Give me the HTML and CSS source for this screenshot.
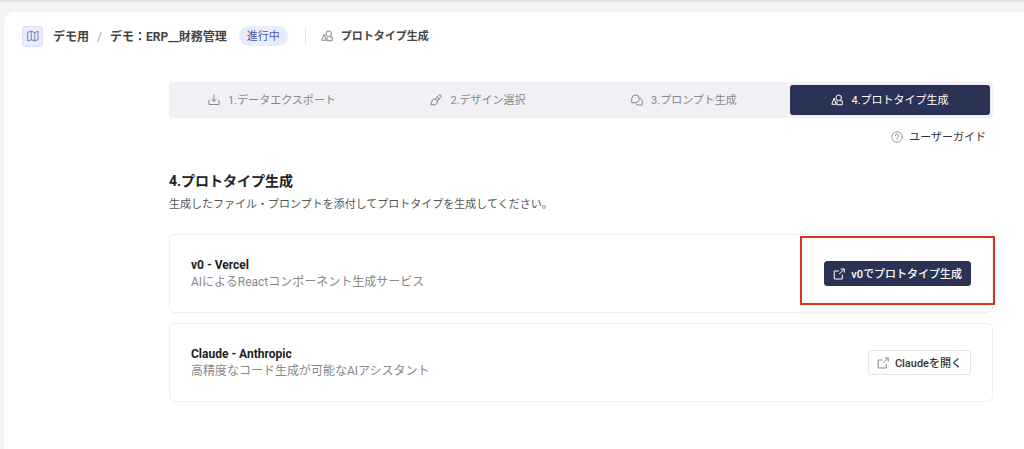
FILE: index.html
```html
<!DOCTYPE html>
<html lang="ja">
<head>
    <meta charset="UTF-8">
    <meta name="viewport" content="width=device-width, initial-scale=1.0">
    <title>プロトタイプ生成</title>
    <link rel="stylesheet" href="styles.css">
</head>
<body>
    <!-- 共通アイコン -->
    <svg class="sprite" aria-hidden="true">
        <symbol id="icon-shapes" viewBox="0 0 24 24">
            <path d="M6 9 L1.5 20.5 H9.5 Z"/>
            <circle cx="15.5" cy="7.5" r="5.5"/>
            <path d="M12 14.5 V21.5 H22.5 V13.5 H18.5"/>
        </symbol>
        <symbol id="icon-external" viewBox="0 0 24 24">
            <path d="M11 6 H2.5 V22 H18.5 V14"/>
            <path d="M16 2 H22.5 V8.5 M22 2.5 L13 11.5"/>
        </symbol>
    </svg>

    <div class="panel">
        <header class="topbar">
            <span class="map">
                <svg class="icon" viewBox="0 0 24 24"><path d="M2 4.5 L8.5 2.5 L15.5 5 L22 2.5 V19.5 L15.5 21.5 L8.5 19.5 L2 21.5 Z M8.5 2.5 V19.5 M15.5 5 V21.5"/></svg>
            </span>
            <nav class="crumbs">
                <a href="#">デモ用</a>
                <span class="slash">/</span>
                <a href="#">デモ：ERP__財務管理</a>
            </nav>
            <span class="status">進行中</span>
            <div class="current">
                <svg class="icon"><use href="#icon-shapes"/></svg>
                <span>プロトタイプ生成</span>
            </div>
        </header>

        <main class="content">
            <div class="steps">
                <button type="button" class="step">
                    <svg class="icon" viewBox="0 0 24 24"><path d="M12 2 V15 M7.5 10.5 L12 15 L16.5 10.5 M2 13 V21 H22 V13"/></svg>
                    <span>1.データエクスポート</span>
                </button>
                <button type="button" class="step">
                    <svg class="icon" viewBox="0 0 24 24"><path d="M11 10 L18 2.5 Q20 1 22 2.5 Q23 4 21.5 6 L15 14 Z M11 10 Q5 8.5 4 14 L1.5 21.5 H11 Q16 20 15 14"/><path d="M14 7 L18 10.5"/></svg>
                    <span>2.デザイン選択</span>
                </button>
                <button type="button" class="step">
                    <svg class="icon" viewBox="0 0 24 24"><path d="M1.5 17 V9.5 A7.5 7.5 0 1 1 9 17 Z"/><path d="M18 8 A7 7 0 0 1 22.5 14.5 V22 H15 A7 7 0 0 1 9.5 19"/></svg>
                    <span>3.プロンプト生成</span>
                </button>
                <button type="button" class="step active">
                    <svg class="icon"><use href="#icon-shapes"/></svg>
                    <span>4.プロトタイプ生成</span>
                </button>
            </div>

            <a class="guide" href="#">
                <svg class="icon" viewBox="0 0 24 24"><circle cx="12" cy="12" r="10.5"/><path d="M8.5 9.5 A3.5 3.5 0 1 1 13.5 12.5 Q12 13.3 12 15 M12 17.5 V18"/></svg>
                <span>ユーザーガイド</span>
            </a>

            <h1>4.プロトタイプ生成</h1>
            <p class="lead">生成したファイル・プロンプトを添付してプロトタイプを生成してください。</p>

            <section class="card">
                <div>
                    <h2>v0 - Vercel</h2>
                    <p>AIによるReactコンポーネント生成サービス</p>
                </div>
                <div class="action marked">
                    <button type="button" class="btn primary">
                        <svg class="icon"><use href="#icon-external"/></svg>
                        <span>v0でプロトタイプ生成</span>
                    </button>
                </div>
            </section>

            <section class="card">
                <div>
                    <h2>Claude - Anthropic</h2>
                    <p>高精度なコード生成が可能なAIアシスタント</p>
                </div>
                <div class="action">
                    <button type="button" class="btn">
                        <svg class="icon"><use href="#icon-external"/></svg>
                        <span>Claudeを開く</span>
                    </button>
                </div>
            </section>
        </main>
    </div>
</body>
</html>
```

FILE: styles.css
```css
* {
    box-sizing: border-box;
    margin: 0;
    padding: 0;
}
body {
    display: flex;
    min-height: 100vh;
    padding: 10px 0 0 4px;
    border-top: 2px solid #e2e2e4;
    background: #f3f3f4;
    color: #222;
    font-family: Roboto, "Noto Sans CJK JP", sans-serif;
    font-size: 11px;
    line-height: 16px;
}
a {
    color: inherit;
    text-decoration: none;
}
button {
    border: 0;
    background: none;
    color: inherit;
    font: inherit;
    cursor: pointer;
}
.sprite {
    position: absolute;
    width: 0;
    height: 0;
}
.icon {
    flex: none;
    width: 12px;
    height: 12px;
    fill: none;
    stroke: currentColor;
    stroke-width: 2;
    stroke-linejoin: round;
    stroke-linecap: round;
}
.panel {
    flex: 1;
    border-radius: 10px 0 0 0;
    background: #fff;
}
/* 和文をアイコンの中心に揃える */
.crumbs,
.current span,
.step span,
.guide span,
.btn span {
    padding-top: 2px;
}

/* ヘッダー */
.topbar {
    display: flex;
    align-items: center;
    height: 48px;
    padding: 0 18px;
    color: #444;
    font-size: 12px;
    font-weight: 700;
}
.map {
    display: flex;
    align-items: center;
    justify-content: center;
    width: 21px;
    height: 21px;
    margin-right: 10px;
    border: 1px solid #d9e0f8;
    border-radius: 3px;
    background: #e8edfc;
    color: #7480b4;
}
.crumbs {
    display: flex;
    gap: 8px;
}
.slash {
    color: #aaa;
    font-weight: 400;
}
.status {
    margin-left: 12px;
    padding: 3px 8px 1px;
    border-radius: 10px;
    background: #e8edfc;
    color: #4c589c;
    font-size: 11px;
    font-weight: 400;
}
.current {
    display: flex;
    align-items: center;
    gap: 8px;
    margin-left: 17px;
    padding-left: 15px;
    border-left: 1px solid #e5e5e5;
    font-size: 11px;
}
.current .icon {
    color: #888;
}

.content {
    padding: 22px 31px 48px 165px;
}

/* ステップ */
.steps {
    display: grid;
    grid-template-columns: repeat(4, 1fr);
    gap: 6px;
    height: 36px;
    padding: 3px;
    border-radius: 4px;
    background: #f0f0f5;
}
.step {
    display: flex;
    align-items: center;
    justify-content: center;
    gap: 8px;
    border-radius: 3px;
    color: #888;
}
.step.active {
    background: #2a3356;
    color: #fff;
}
.guide {
    display: flex;
    align-items: center;
    justify-content: flex-end;
    gap: 6px;
    margin-top: 10px;
    padding-right: 7px;
    color: #333;
}
.guide .icon {
    color: #999;
}

h1 {
    margin-top: 25px;
    font-size: 14px;
    line-height: 20px;
}
.lead {
    margin: 6px 0 21px;
    color: #555;
}

/* カード */
.card {
    display: flex;
    align-items: center;
    justify-content: space-between;
    height: 79px;
    margin-bottom: 10px;
    padding: 0 21px;
    border: 1px solid #eee;
    border-radius: 6px;
}
.card h2 {
    font-size: 12px;
    line-height: 17px;
}
.card p {
    color: #888;
    font-size: 12px;
    line-height: 17px;
}
.action {
    position: relative;
}
/* 注目させたいボタンの赤枠 */
.marked::after {
    content: "";
    position: absolute;
    inset: -25px -24px -19px -24px;
    border: 2px solid #d8351e;
    pointer-events: none;
}
.btn {
    display: flex;
    align-items: center;
    gap: 6px;
    height: 25px;
    padding: 0 8px;
    border: 1px solid #e5e5e5;
    border-radius: 3px;
    color: #333;
    font-weight: 500;
}
.btn .icon {
    color: #888;
}
.btn.primary {
    border-color: #2a3356;
    background: #2a3356;
    color: #fff;
}
.btn.primary .icon {
    color: inherit;
}
```
